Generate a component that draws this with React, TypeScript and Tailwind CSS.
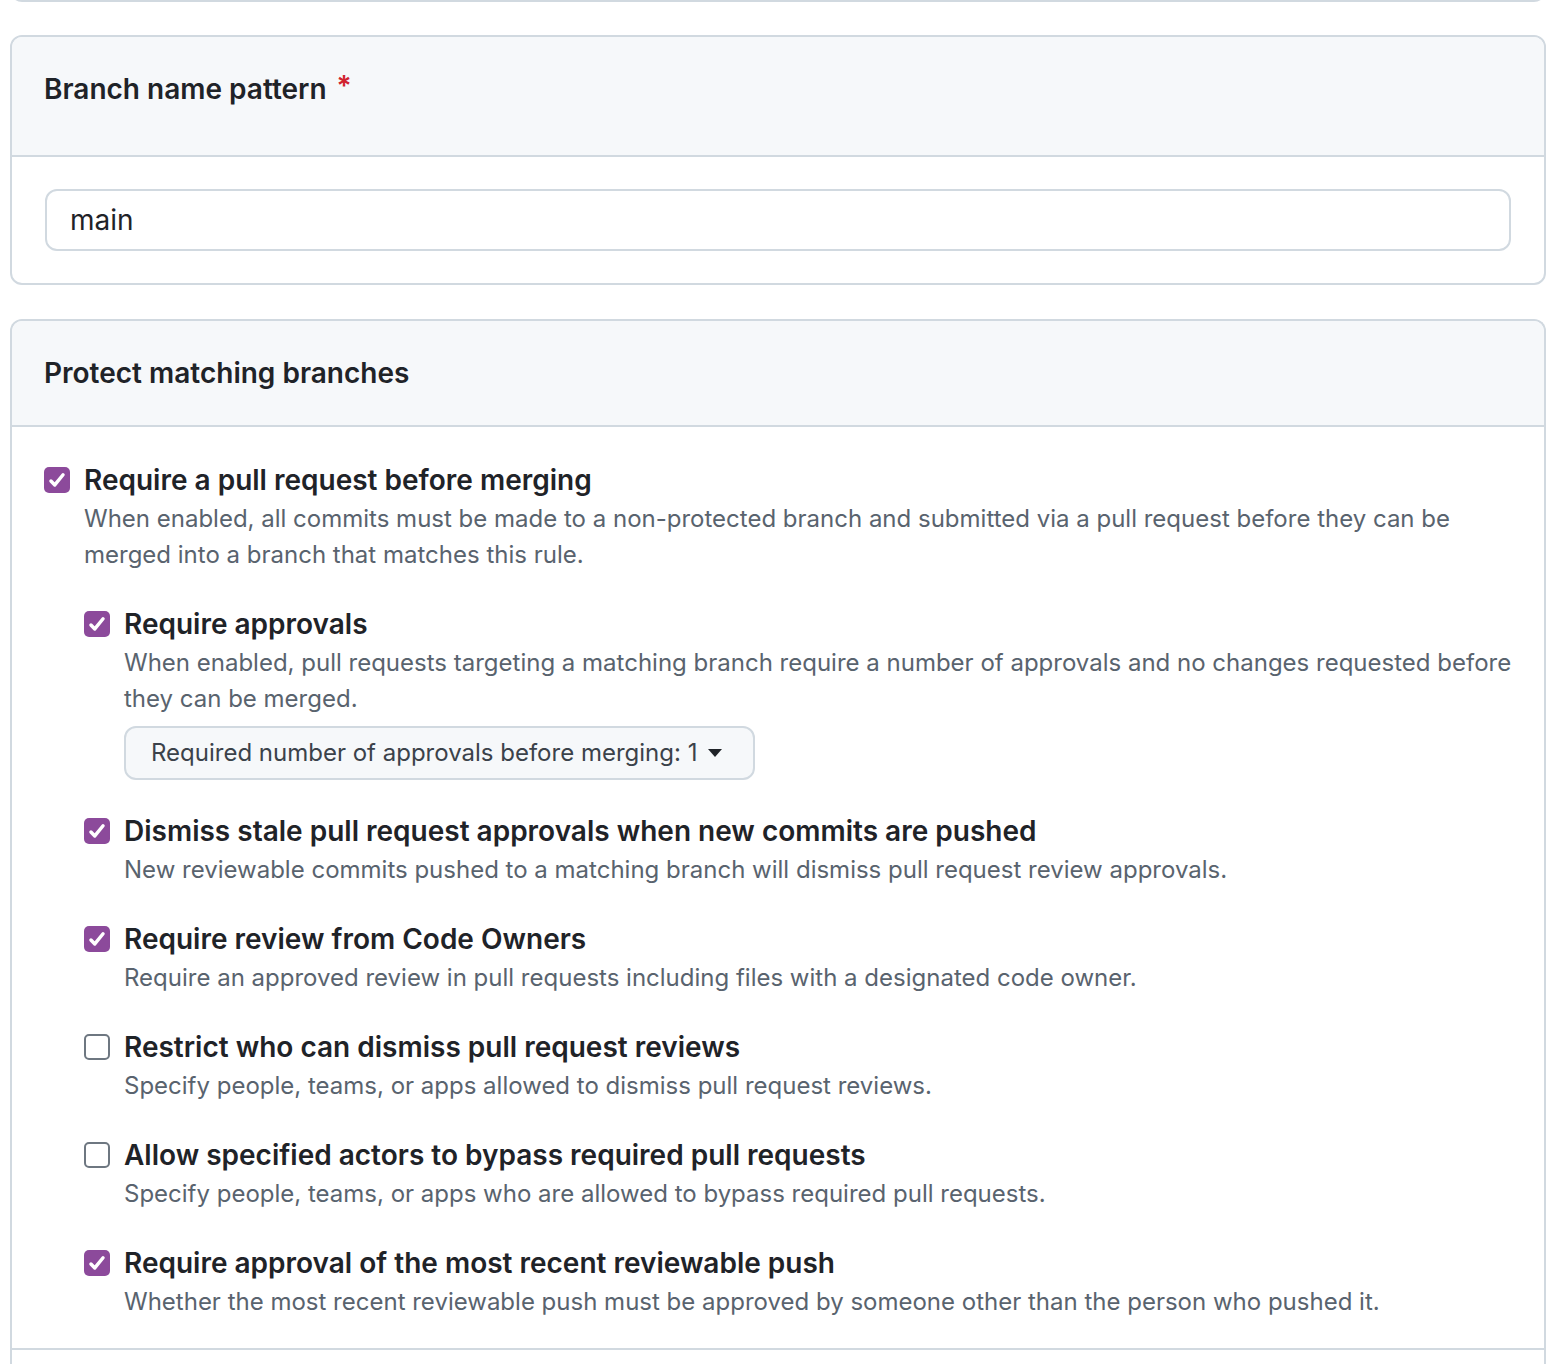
import React from 'react'

const font = { fontFamily: 'Inter, "Noto Sans", "Liberation Sans", sans-serif' }

interface Rule {
  label: string
  description: string
  checked: boolean
}

const rules: Rule[] = [
  {
    label: 'Dismiss stale pull request approvals when new commits are pushed',
    description:
      'New reviewable commits pushed to a matching branch will dismiss pull request review approvals.',
    checked: true,
  },
  {
    label: 'Require review from Code Owners',
    description:
      'Require an approved review in pull requests including files with a designated code owner.',
    checked: true,
  },
  {
    label: 'Restrict who can dismiss pull request reviews',
    description: 'Specify people, teams, or apps allowed to dismiss pull request reviews.',
    checked: false,
  },
  {
    label: 'Allow specified actors to bypass required pull requests',
    description: 'Specify people, teams, or apps who are allowed to bypass required pull requests.',
    checked: false,
  },
  {
    label: 'Require approval of the most recent reviewable push',
    description:
      'Whether the most recent reviewable push must be approved by someone other than the person who pushed it.',
    checked: true,
  },
]

function Checkbox({ checked }: { checked: boolean }) {
  if (!checked) {
    return (
      <span className="mt-[8px] block h-[26px] w-[26px] shrink-0 rounded-[5px] border-2 border-[#6e7781] bg-white" />
    )
  }
  return (
    <span className="mt-[8px] flex h-[26px] w-[26px] shrink-0 items-center justify-center rounded-[5px] bg-[#8c4a9b]">
      <svg width="22" height="22" viewBox="0 0 16 16" fill="none">
        <path
          d="M3.6 8.7l2.8 2.9 6-7.4"
          stroke="white"
          strokeWidth="2.5"
          strokeLinecap="round"
          strokeLinejoin="round"
        />
      </svg>
    </span>
  )
}

function RuleItem({
  label,
  description,
  checked,
  children,
}: Rule & { children?: React.ReactNode }) {
  return (
    <div className="flex gap-[14px]">
      <Checkbox checked={checked} />
      <div className="min-w-0 flex-1">
        <div className="text-[28px] font-semibold leading-[42px] text-[#1f2328]">{label}</div>
        <p className="text-[24px] leading-[36px] text-[#59636e]">{description}</p>
        {children}
      </div>
    </div>
  )
}

export default function App() {
  return (
    <div className="min-h-[1364px] bg-white" style={font}>
      <div className="ml-[10px] w-[1536px]">
        {/* tail of the previous box */}
        <div className="-mt-[10px] h-[12px] rounded-b-[12px] border-2 border-t-0 border-[#d1d9e0]" />

        {/* Branch name pattern */}
        <div className="mt-[33px] overflow-hidden rounded-[12px] border-2 border-[#d1d9e0]">
          <div className="flex h-[120px] items-center border-b-2 border-[#d1d9e0] bg-[#f6f8fa] px-[32px] pb-[14px]">
            <h2 className="text-[28px] font-semibold text-[#1f2328]">Branch name pattern</h2>
            <span className="ml-[10px] -mt-[6px] text-[28px] font-semibold leading-none text-[#d1242f]">*</span>
          </div>
          <div className="px-[33px] py-[32px]">
            <div className="flex h-[62px] items-center rounded-[12px] border-2 border-[#d1d9e0] bg-white pl-[23px] text-[28px] text-[#1f2328]">
              main
            </div>
          </div>
        </div>

        {/* Protect matching branches */}
        <div className="mt-[34px] rounded-t-[12px] border-2 border-b-0 border-[#d1d9e0]">
          <div className="flex h-[106px] items-center rounded-t-[10px] border-b-2 border-[#d1d9e0] bg-[#f6f8fa] px-[32px]">
            <h2 className="text-[28px] font-semibold text-[#1f2328]">Protect matching branches</h2>
          </div>
          <div className="border-b-2 border-[#d1d9e0] pb-[28px] pl-[32px] pr-[20px] pt-[32px]">
            <RuleItem
              label="Require a pull request before merging"
              description="When enabled, all commits must be made to a non-protected branch and submitted via a pull request before they can be merged into a branch that matches this rule."
              checked
            >
              <div className="mt-[30px] flex flex-col gap-[30px]">
                <RuleItem
                  label="Require approvals"
                  description="When enabled, pull requests targeting a matching branch require a number of approvals and no changes requested before they can be merged."
                  checked
                >
                  <button className="mt-[9px] flex h-[54px] items-center gap-[10px] rounded-[12px] border-2 border-[#d1d9e0] bg-[#f6f8fa] pl-[25px] pr-[30px] text-[24px] text-[#3b424a]">
                    Required number of approvals before merging: 1
                    <svg width="16" height="10" viewBox="0 0 16 10">
                      <path d="M1 1h14L8 9z" fill="#1f2328" />
                    </svg>
                  </button>
                </RuleItem>
                {rules.map((rule) => (
                  <RuleItem key={rule.label} {...rule} />
                ))}
              </div>
            </RuleItem>
          </div>
          <div className="h-[120px]" />
        </div>
      </div>
    </div>
  )
}
